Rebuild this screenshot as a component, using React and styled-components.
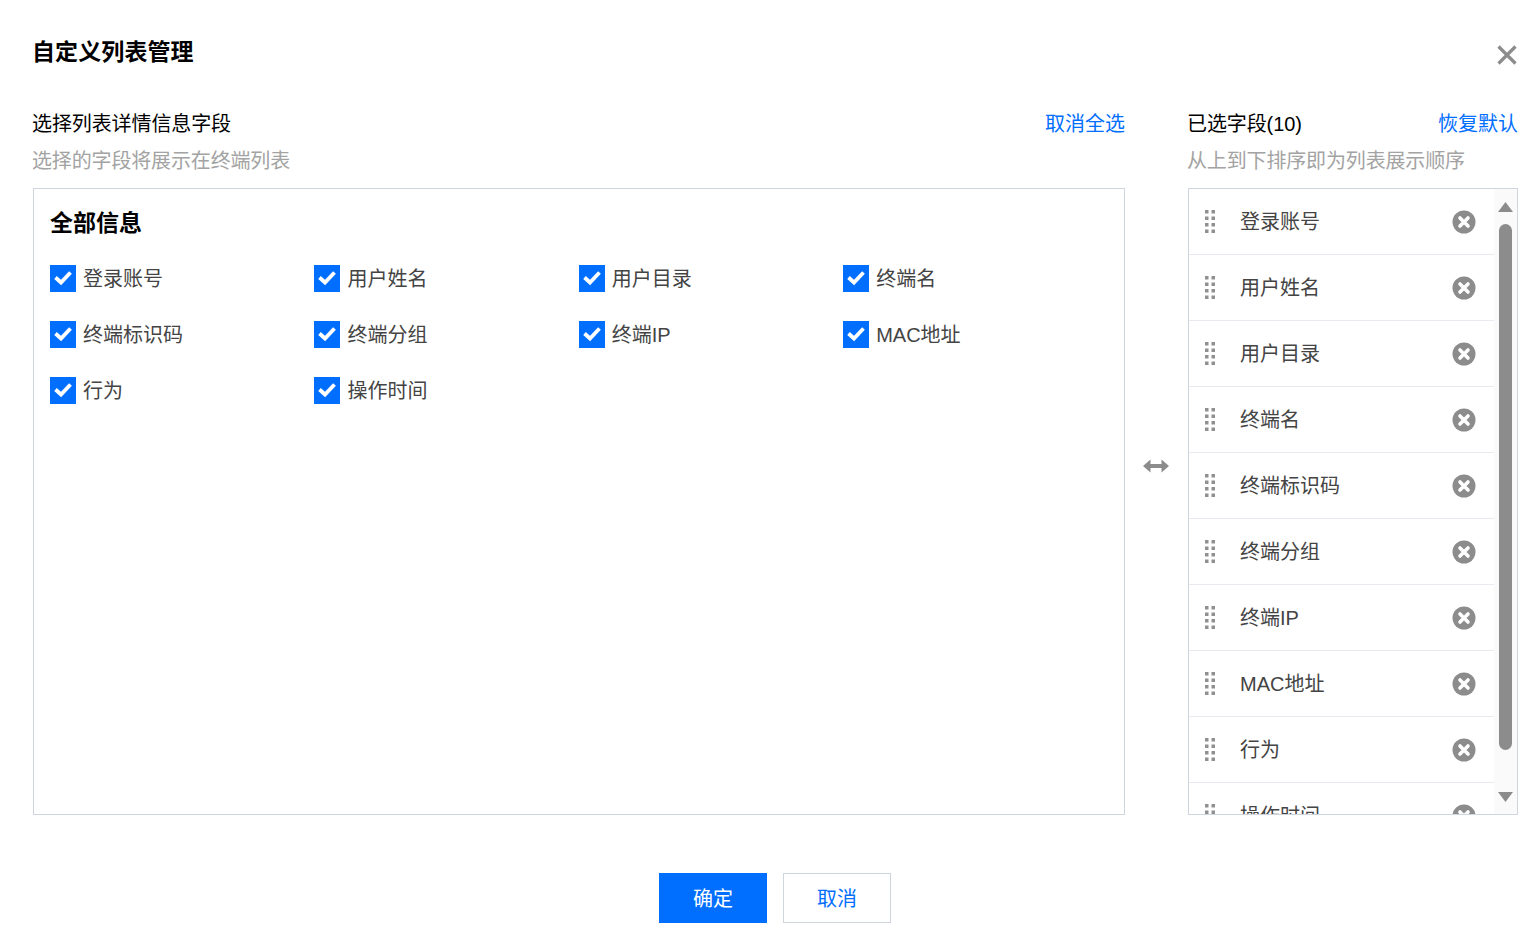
import React from "react";
import styled, { createGlobalStyle } from "styled-components";

const Global = createGlobalStyle`
  html, body { margin: 0; padding: 0; background: #fff; }
  body { font-family: "Liberation Sans", "Noto Sans CJK SC", sans-serif; overflow: hidden; }
  * { box-sizing: border-box; }
`;

const Dialog = styled.div`
  width: 1533px;
  height: 940px;
  padding: 34px 15px 0 33px;
  display: flex;
  flex-direction: column;
  overflow: hidden;
`;
const Head = styled.div`
  height: 34px;
  display: flex;
  justify-content: space-between;
  align-items: flex-start;
`;
const Title = styled.h2`
  margin: 1px 0 0 -1px;
  font-size: 23px;
  line-height: 34px;
  font-weight: 700;
  letter-spacing: 0.1px;
  color: #000;
`;
const Close = styled.button`
  border: 0;
  background: none;
  padding: 0;
  margin: 11px 1px 0 0;
  width: 20px;
  height: 20px;
  display: block;
`;
const Body = styled.div`
  margin-top: 37px;
  display: flex;
  align-items: stretch;
`;
const LeftCol = styled.section`
  width: 1092px;
  flex: none;
`;
const Middle = styled.div`
  width: 63px;
  flex: none;
  padding: 12px 1px 0 0;
  display: flex;
  align-items: center;
  justify-content: center;
`;
const RightCol = styled.section`
  width: 330px;
  flex: none;
`;
const ColHead = styled.div`
  display: flex;
  justify-content: space-between;
  height: 37px;
  line-height: 28px;
  font-size: 20px;
  margin-top: 5px;
`;
const ColTitle = styled.span`
  color: #000;
  margin-left: -1px;
  letter-spacing: -0.1px;
`;
const Link = styled.a`
  color: #006eff;
`;
const Hint = styled.div`
  height: 41px;
  line-height: 28px;
  font-size: 20px;
  color: #a3a3a3;
  margin-left: -1px;
  letter-spacing: -0.15px;
`;
const Panel = styled.div`
  height: 627px;
  border: 1px solid #cfd5de;
  overflow: hidden;
`;
const AllPanel = styled(Panel)`
  padding: 16px 16px 0;
`;
const AllTitle = styled.h3`
  margin: 0 0 24px;
  font-size: 23px;
  line-height: 36px;
  font-weight: 700;
  color: #000;
`;
const CheckGrid = styled.div`
  display: grid;
  grid-template-columns: repeat(4, 264.4px);
  grid-auto-rows: 56px;
`;
const CheckItem = styled.label`
  display: flex;
  align-items: flex-start;
  gap: 7px;
  font-size: 20px;
  color: #444;
`;
const ItemText = styled.span`
  padding-top: 1px;
  line-height: 27px;
`;
const Box = styled.span`
  width: 26px;
  height: 27px;
  background: #006eff;
  flex: none;
  display: flex;
  align-items: center;
  justify-content: center;
`;
const ListPanel = styled(Panel)`
  display: flex;
`;
const List = styled.ul`
  list-style: none;
  margin: 0;
  padding: 0;
  width: 305px;
  flex: none;
`;
const Row = styled.li`
  height: 66px;
  border-bottom: 1px solid #e7eaef;
  padding: 0 18px 0 16px;
  display: flex;
  align-items: center;
  font-size: 20px;
  color: #444;
`;
const RowLabel = styled.span`
  margin-left: 25px;
  flex: 1;
  line-height: 28px;
`;
const Track = styled.div`
  flex: 1;
  background: #fafafa;
  display: flex;
  flex-direction: column;
  align-items: center;
  padding-top: 13px;
`;
const Thumb = styled.div`
  width: 13px;
  height: 526px;
  margin: 12px 0 42px;
  border-radius: 7px;
  background: #8c8c8c;
`;
const Footer = styled.div`
  margin-top: 58px;
  display: flex;
  justify-content: center;
  gap: 16px;
  padding-right: 1px;
`;
const Btn = styled.button`
  width: 108px;
  height: 50px;
  font: inherit;
  font-size: 20px;
  padding: 0 0 2px;
  border: 1px solid ${p => (p.$primary ? "#006eff" : "#cfd5de")};
  background: ${p => (p.$primary ? "#006eff" : "#fff")};
  color: ${p => (p.$primary ? "#fff" : "#006eff")};
`;

const Check = () => (
  <svg width="18" height="15" viewBox="0 0 18 15" fill="none">
    <path d="M1.500 6.500l5.500 5 9.500-10" stroke="#fff" strokeWidth="3.8" />
  </svg>
);
const Grip = () => (
  <svg width="10" height="23" viewBox="0 0 10 23" fill="#909090" style={{ flex: "none" }}>
    {[0, 6.5, 13, 19.5].map(y => (
      <g key={y}>
        <rect x="0" y={y} width="3.5" height="3.5" />
        <rect x="6.5" y={y} width="3.5" height="3.5" />
      </g>
    ))}
  </svg>
);
const Remove = () => (
  <svg width="24" height="24" viewBox="0 0 24 24" style={{ flex: "none" }}>
    <circle cx="12" cy="12" r="11.5" fill="#8c8c8c" />
    <path d="M8 8l8 8M16 8l-8 8" stroke="#fff" strokeWidth="3.6" strokeLinecap="round" />
  </svg>
);

const fields = ["登录账号", "用户姓名", "用户目录", "终端名", "终端标识码", "终端分组", "终端IP", "MAC地址", "行为", "操作时间"];

export default function App() {
  return (
    <Dialog>
      <Global />
      <Head>
        <Title>自定义列表管理</Title>
        <Close aria-label="关闭">
          <svg width="20" height="20" viewBox="0 0 20 20" fill="none">
            <path d="M1.500 1.500l17 17M18.500 1.500l-17 17" stroke="#8c8c8c" strokeWidth="3.2" />
          </svg>
        </Close>
      </Head>
      <Body>
        <LeftCol>
          <ColHead>
            <ColTitle>选择列表详情信息字段</ColTitle>
            <Link>取消全选</Link>
          </ColHead>
          <Hint>选择的字段将展示在终端列表</Hint>
          <AllPanel>
            <AllTitle>全部信息</AllTitle>
            <CheckGrid>
              {fields.map(f => (
                <CheckItem key={f}>
                  <Box><Check /></Box>
                  <ItemText>{f}</ItemText>
                </CheckItem>
              ))}
            </CheckGrid>
          </AllPanel>
        </LeftCol>
        <Middle>
          <svg width="26" height="14" viewBox="0 0 26 14" fill="#8c8c8c">
            <path d="M0 7l7.500-6.500V5h11V.5L26 7l-7.500 6.500V9h-11v4.500z" />
          </svg>
        </Middle>
        <RightCol>
          <ColHead>
            <ColTitle>已选字段(10)</ColTitle>
            <Link>恢复默认</Link>
          </ColHead>
          <Hint>从上到下排序即为列表展示顺序</Hint>
          <ListPanel>
            <List>
              {fields.map(f => (
                <Row key={f}>
                  <Grip />
                  <RowLabel>{f}</RowLabel>
                  <Remove />
                </Row>
              ))}
            </List>
            <Track>
              <svg width="15" height="10" viewBox="0 0 15 10" fill="#8c8c8c" style={{ flex: "none" }}>
                <path d="M7.500 0L15 10H0z" />
              </svg>
              <Thumb />
              <svg width="15" height="10" viewBox="0 0 15 10" fill="#8c8c8c" style={{ flex: "none" }}>
                <path d="M7.500 10L15 0H0z" />
              </svg>
            </Track>
          </ListPanel>
        </RightCol>
      </Body>
      <Footer>
        <Btn $primary>确定</Btn>
        <Btn>取消</Btn>
      </Footer>
    </Dialog>
  );
}
